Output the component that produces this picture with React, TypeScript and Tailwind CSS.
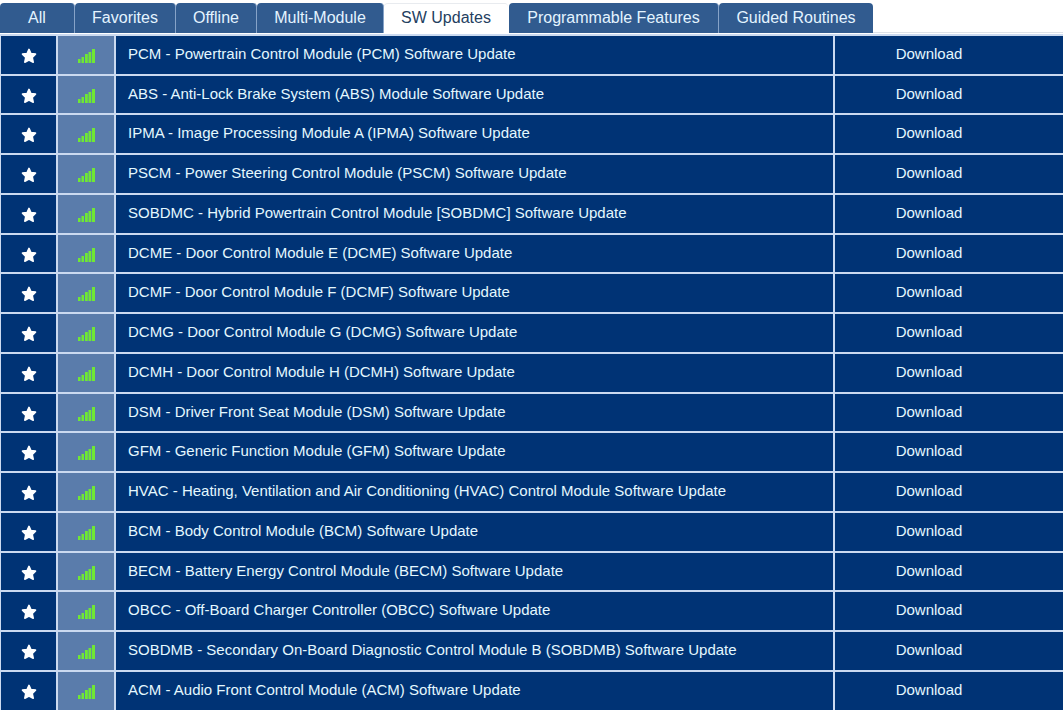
import { useState } from "react";

const tabs = [
  { name: "All", width: "w-[75px]" },
  { name: "Favorites", width: "w-[101px]" },
  { name: "Offline", width: "w-[81px]" },
  { name: "Multi-Module", width: "w-[127px]" },
  { name: "SW Updates", width: "w-[125px]" },
  { name: "Programmable Features", width: "w-[210px]" },
  { name: "Guided Routines", width: "w-[154px]" },
];

const modules = [
  "PCM - Powertrain Control Module (PCM) Software Update",
  "ABS - Anti-Lock Brake System (ABS) Module Software Update",
  "IPMA - Image Processing Module A (IPMA) Software Update",
  "PSCM - Power Steering Control Module (PSCM) Software Update",
  "SOBDMC - Hybrid Powertrain Control Module [SOBDMC] Software Update",
  "DCME - Door Control Module E (DCME) Software Update",
  "DCMF - Door Control Module F (DCMF) Software Update",
  "DCMG - Door Control Module G (DCMG) Software Update",
  "DCMH - Door Control Module H (DCMH) Software Update",
  "DSM - Driver Front Seat Module (DSM) Software Update",
  "GFM - Generic Function Module (GFM) Software Update",
  "HVAC - Heating, Ventilation and Air Conditioning (HVAC) Control Module Software Update",
  "BCM - Body Control Module (BCM) Software Update",
  "BECM - Battery Energy Control Module (BECM) Software Update",
  "OBCC - Off-Board Charger Controller (OBCC) Software Update",
  "SOBDMB - Secondary On-Board Diagnostic Control Module B (SOBDMB) Software Update",
  "ACM - Audio Front Control Module (ACM) Software Update",
];

function Star() {
  return (
    <svg viewBox="0 0 16 16" className="h-4 w-4" fill="#fff" stroke="#fff" strokeWidth="1.6" strokeLinejoin="round" aria-hidden="true">
      <path d="M8 1.4 9.9 5.6 14.5 6.1 11.2 9.4 12.2 14.2 8 12 3.8 14.2 4.8 9.4 1.5 6.1 6.1 5.6Z" />
    </svg>
  );
}

function Signal() {
  return (
    <svg viewBox="0 0 17 14" className="h-3.5 w-[17px]" fill="#6fe834" role="img" aria-label="Online">
      <rect x="0" y="10" width="2.5" height="4" />
      <rect x="3.5" y="8" width="2.5" height="6" />
      <rect x="7" y="5" width="2.8" height="9" />
      <rect x="10.5" y="3" width="2.8" height="11" />
      <rect x="14" y="0" width="3" height="14" />
    </svg>
  );
}

export default function App() {
  const [active, setActive] = useState("SW Updates");
  const [favorites, setFavorites] = useState<string[]>(modules);

  const toggle = (name: string) =>
    setFavorites((list) => (list.includes(name) ? list.filter((n) => n !== name) : [...list, name]));

  return (
    <main className="min-h-screen bg-white font-['Liberation_Sans',Arial,sans-serif]">
      <nav className="border-b border-[#dde2e8] pt-[3px]">
        <div role="tablist" className="-mb-px flex">
          {tabs.map((tab) => (
            <button
              key={tab.name}
              type="button"
              role="tab"
              aria-selected={tab.name === active}
              onClick={() => setActive(tab.name)}
              className={`${tab.width} h-[30px] shrink-0 whitespace-nowrap rounded-t border-r text-base last:border-r-0 ${
                tab.name === active
                  ? "border-white bg-white text-[#24405f] shadow-[inset_0_1px_0_#e8ebef]"
                  : "border-[#86a3c8] bg-[#315b8f] text-[#e4f4ff]"
              }`}
            >
              {tab.name}
            </button>
          ))}
        </div>
      </nav>
      <table className="mt-px w-full table-fixed border-separate border-spacing-0 border-l border-t-2 border-[#cbdaf0] bg-[#003375] text-[15px] leading-5 text-[#e4f8ff]">
        <colgroup>
          <col className="w-[57px]" />
          <col className="w-[58px]" />
          <col />
          <col className="w-[228px]" />
        </colgroup>
        <tbody>
          {modules.map((name) => (
            <tr key={name} className="h-10 nth-[4n+2]:h-[39px]">
              <td className="border-b-2 border-r-2 border-[#cbdaf0] p-0">
                <button
                  type="button"
                  aria-label={`Favorite ${name}`}
                  aria-pressed={favorites.includes(name)}
                  onClick={() => toggle(name)}
                  className="mx-auto mt-0.5 block aria-[pressed=false]:opacity-40"
                >
                  <Star />
                </button>
              </td>
              <td className="border-b-2 border-r-2 border-[#cbdaf0] bg-[#5a7cab] p-0">
                <div className="mt-0.5 flex justify-center">
                  <Signal />
                </div>
              </td>
              <td className="whitespace-nowrap border-b-2 border-r-2 border-[#cbdaf0] pb-0.5 pl-3 pr-2 pt-0">{name}</td>
              <td className="border-b-2 border-[#cbdaf0] pb-0.5 pl-0 pr-10 pt-0 text-center">
                <button type="button">Download</button>
              </td>
            </tr>
          ))}
        </tbody>
      </table>
    </main>
  );
}
